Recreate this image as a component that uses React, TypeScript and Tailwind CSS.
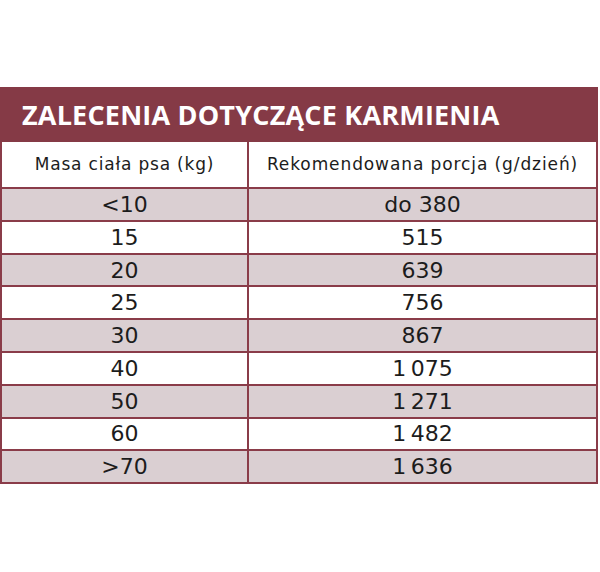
const rows: [string, string][] = [
  ['<10', 'do 380'],
  ['15', '515'],
  ['20', '639'],
  ['25', '756'],
  ['30', '867'],
  ['40', '1\u2009075'],
  ['50', '1\u2009271'],
  ['60', '1\u2009482'],
  ['>70', '1\u2009636'],
]

const titleFont = { fontFamily: '"Open Sans", "Liberation Sans", sans-serif' }
const bodyFont = { fontFamily: '"DejaVu Sans", "Open Sans", sans-serif' }

export default function App() {
  return (
    <div className="h-[572px] w-[600px] bg-white pt-[87px]">
      <div className="w-[598px]">
        <div className="flex h-[55px] items-center bg-[#853a46] pl-[22px]" style={titleFont}>
          <h1 className="text-[27px] font-bold leading-none tracking-[0.2px] text-white">
            ZALECENIA DOTYCZĄCE KARMIENIA
          </h1>
        </div>
        <div
          className="grid grid-cols-[245px_1fr] gap-[2px] border-x-2 border-b-2 border-[#8a3c49] bg-[#8a3c49] text-[#1c1c1c]"
          style={bodyFont}
        >
          <div className="flex h-[45px] items-center justify-center bg-white text-[17px] tracking-[0.8px]">
            Masa ciała psa (kg)
          </div>
          <div className="flex h-[45px] items-center justify-center bg-white text-[17px] tracking-[0.9px]">
            Rekomendowana porcja (g/dzień)
          </div>
          {rows.map(([mass, portion], i) => {
            const bg = i % 2 === 0 ? 'bg-[#dacfd2]' : 'bg-white'
            return (
              <div key={mass} className="contents">
                <div className={`flex h-[30.8px] items-center justify-center text-[22px] ${bg}`}>
                  {mass}
                </div>
                <div className={`flex h-[30.8px] items-center justify-center text-[22px] ${bg}`}>
                  {portion}
                </div>
              </div>
            )
          })}
        </div>
      </div>
    </div>
  )
}
